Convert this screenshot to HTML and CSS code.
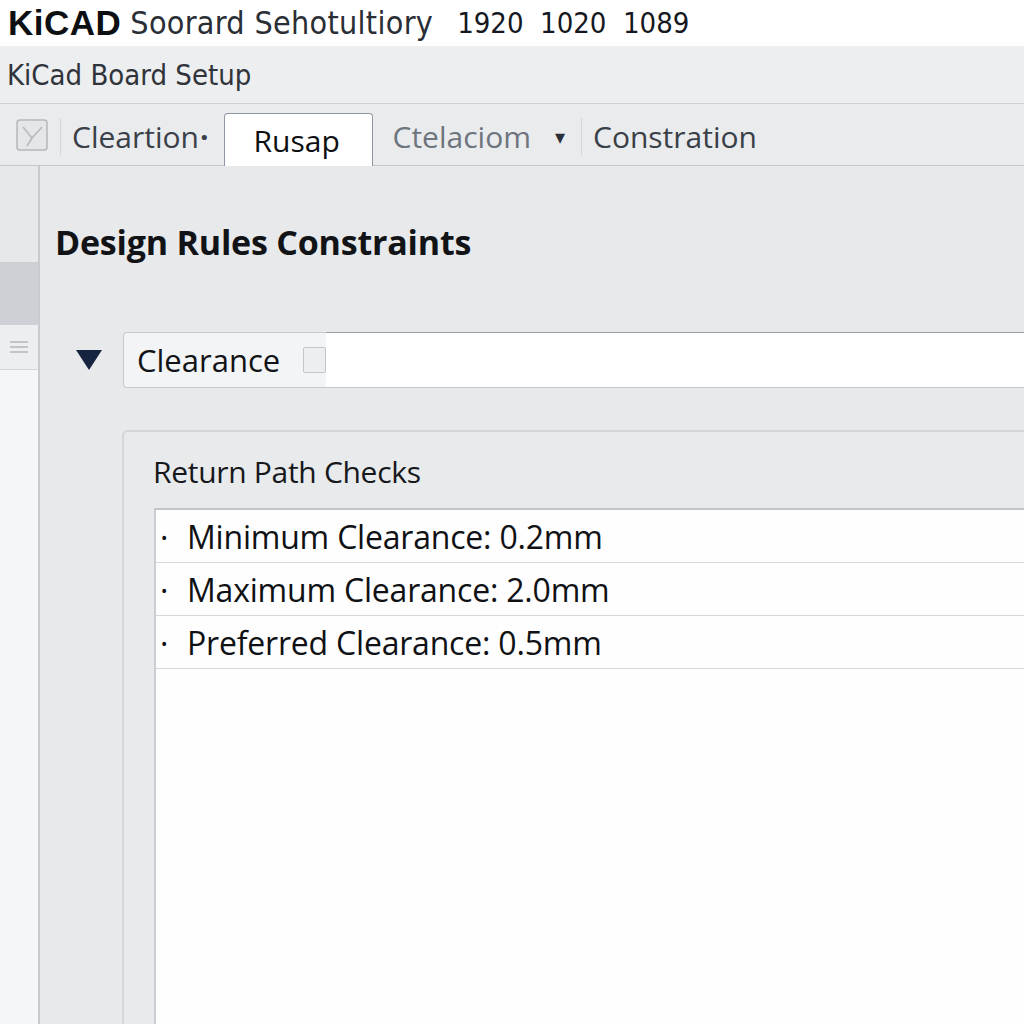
FILE: index.html
```html
<!DOCTYPE html>
<html>
<head>
<meta charset="utf-8">
<link rel="stylesheet" href="styles.css">
</head>
<body>
<div class="window">
  <div class="titlebar">
    <span class="brand">KiCAD</span>
    <span class="apptitle">Soorard Sehotultiory</span>
    <span class="nums">1920&nbsp; 1020&nbsp; 1089</span>
  </div>
  <div class="subtitle">KiCad Board Setup</div>
  <div class="tabs">
    <div class="tab-check">
      <svg width="32" height="32" viewBox="0 0 32 32">
        <rect x="1" y="1" width="30" height="30" rx="3" fill="#e4e6e8" stroke="#b4b8bd" stroke-width="1.5"/>
        <path d="M7 8 L16 19 L26 8 M16 19 L11 27" fill="none" stroke="#b6babf" stroke-width="1.6"/>
      </svg>
    </div>
    <div class="sep"></div>
    <div class="tab first">Cleartion<span class="dot">·</span></div>
    <div class="tab active">Rusap</div>
    <div class="tab faded">Ctelaciom</div>
    <div class="caret">▾</div>
    <div class="sep"></div>
    <div class="tab last">Constration</div>
  </div>
  <div class="main">
    <div class="side">
      <div class="side-top"></div>
      <div class="side-dark"></div>
      <div class="side-menu">
        <svg width="20" height="14" viewBox="0 0 20 14"><path d="M1 2H19M1 7H19M1 12H19" stroke="#b3b7bc" stroke-width="1.5"/></svg>
      </div>
      <div class="side-rest"></div>
    </div>
    <div class="content">
      <h1 class="heading">Design Rules Constraints</h1>
      <div class="rule-row">
        <svg class="tri" width="28" height="22" viewBox="0 0 28 22"><path d="M1 1H27L14 21Z" fill="#16243f"/></svg>
        <div class="rule-box">
          <div class="rule-label">Clearance<span class="mini-box"></span></div>
          <div class="rule-field"></div>
        </div>
      </div>
      <div class="panel">
        <div class="panel-title">Return Path Checks</div>
        <div class="panel-body">
          <div class="list">
            <div class="item"><span class="bullet">·</span>Minimum Clearance: 0.2mm</div>
            <div class="item"><span class="bullet">·</span>Maximum Clearance: 2.0mm</div>
            <div class="item"><span class="bullet">·</span>Preferred Clearance: 0.5mm</div>
          </div>
        </div>
      </div>
    </div>
  </div>
</div>
</body>
</html>
```

FILE: styles.css
```css
html, body {
  margin: 0;
  padding: 0;
}
body {
  width: 1024px;
  height: 1024px;
  overflow: hidden;
  background: #e8e9eb;
  font-family: "Open Sans", "Noto Sans", sans-serif;
  color: #1b1d20;
}
.window {
  display: flex;
  flex-direction: column;
  height: 1024px;
}
.titlebar {
  height: 46px;
  background: #ffffff;
  display: flex;
  align-items: center;
  padding-left: 8px;
  white-space: nowrap;
}
.brand {
  font-family: "Liberation Sans", sans-serif;
  font-weight: bold;
  font-size: 35px;
  letter-spacing: 0.5px;
  color: #0d0f12;
  margin-right: 9px;
}
.apptitle {
  font-family: "DejaVu Sans Condensed", "DejaVu Sans", sans-serif;
  font-stretch: condensed;
  font-size: 32px;
  color: #2a2e35;
  margin-right: 24px;
  letter-spacing: 0.3px;
}
.nums {
  font-family: "DejaVu Sans Condensed", "DejaVu Sans", sans-serif;
  font-stretch: condensed;
  font-size: 29px;
  color: #151820;
}
.subtitle {
  height: 57px;
  background: #eceef0;
  border-bottom: 1px solid #cdd0d4;
  display: flex;
  align-items: center;
  padding-left: 7px;
  font-family: "DejaVu Sans Condensed", "DejaVu Sans", sans-serif;
  font-stretch: condensed;
  font-size: 29px;
  color: #30343a;
}
.tabs {
  height: 61px;
  background: #e9ebed;
  border-bottom: 1px solid #c4c7cb;
  display: flex;
  align-items: stretch;
  padding-left: 16px;
  font-size: 30px;
  color: #3a4048;
}
.tab-check {
  display: flex;
  align-items: center;
  margin-right: 12px;
}
.sep {
  width: 1px;
  background: #d2d5d9;
  margin: 14px 0 10px;
}
.tab {
  display: flex;
  align-items: center;
  font-family: "Open Sans", sans-serif;
  white-space: nowrap;
  padding-top: 3px;
}
.tab.first {
  padding-left: 11px;
  padding-right: 11px;
}
.tab .dot {
  font-weight: bold;
  margin-left: 1px;
}
.tab.active {
  margin-top: 9px;
  background: #ffffff;
  border: 1px solid #8e96a3;
  border-bottom: none;
  border-radius: 4px 4px 0 0;
  width: 149px;
  padding: 0 0 0 29px;
  box-sizing: border-box;
  color: #0d0f12;
  margin-bottom: -1px;
  margin-left: 4px;
}
.tab.faded {
  color: #6e757e;
  padding-left: 20px;
  padding-right: 24px;
}
.tab.last {
  padding-left: 11px;
}
.caret {
  display: flex;
  align-items: center;
  font-size: 20px;
  color: #2a2e35;
  margin: 3px 16px 0 0;
}
.main {
  flex: 1;
  display: flex;
  min-height: 0;
}
.side {
  width: 38px;
  border-right: 2px solid #c7cacf;
  display: flex;
  flex-direction: column;
}
.side-top {
  height: 96px;
  background: #e6e8ea;
}
.side-dark {
  height: 63px;
  background: #cdd0d4;
}
.side-menu {
  height: 44px;
  background: #eceef0;
  border-bottom: 1px solid #d4d7da;
  display: flex;
  align-items: center;
  justify-content: center;
}
.side-rest {
  flex: 1;
  background: #f5f6f8;
}
.content {
  flex: 1;
  display: flex;
  flex-direction: column;
  padding-left: 15px;
  min-width: 0;
}
.heading {
  margin: 56px 0 0;
  height: 40px;
  font-size: 34px;
  font-weight: 700;
  letter-spacing: -0.2px;
  color: #111316;
  line-height: 40px;
  white-space: nowrap;
}
.rule-row {
  margin-top: 70px;
  display: flex;
  align-items: center;
  height: 56px;
}
.tri {
  margin-left: 20px;
  margin-right: 20px;
}
.rule-box {
  flex: 1;
  height: 56px;
  box-sizing: border-box;
  border: 1px solid #c5c8cc;
  border-right: none;
  border-radius: 4px 0 0 4px;
  display: flex;
  background: #f3f4f5;
}
.rule-label {
  display: flex;
  align-items: center;
  padding-left: 13px;
  font-size: 31px;
  color: #111316;
  width: 202px;
  box-sizing: border-box;
  white-space: nowrap;
}
.mini-box {
  display: inline-block;
  width: 23px;
  height: 26px;
  box-sizing: border-box;
  border: 1px solid #c2c6cb;
  border-radius: 2px;
  background: #eceef0;
  margin-left: auto;
}
.rule-field {
  flex: 1;
  background: #ffffff;
  border-top: 1px solid #9aa0a8;
  margin-top: -1px;
}
.panel {
  margin-top: 42px;
  margin-left: 67px;
  flex: 1;
  border: 2px solid #d3d6da;
  border-right: none;
  border-bottom: none;
  border-radius: 6px 0 0 0;
  background: #e9eaec;
  display: flex;
  flex-direction: column;
}
.panel-title {
  height: 76px;
  line-height: 80px;
  padding-left: 29px;
  font-size: 30px;
  letter-spacing: -0.3px;
  color: #16181b;
  white-space: nowrap;
}
.panel-body {
  flex: 1;
  margin-left: 30px;
  border-left: 2px solid #c9ccd0;
  border-top: 2px solid #c2c5c9;
  background: #fefefe;
}
.item {
  height: 52px;
  line-height: 54px;
  padding-left: 4px;
  font-size: 32px;
  letter-spacing: -0.2px;
  color: #0f1114;
  border-bottom: 1.5px solid #d6d9dc;
  white-space: nowrap;
}
.bullet {
  display: inline-block;
  width: 27px;
}
```
